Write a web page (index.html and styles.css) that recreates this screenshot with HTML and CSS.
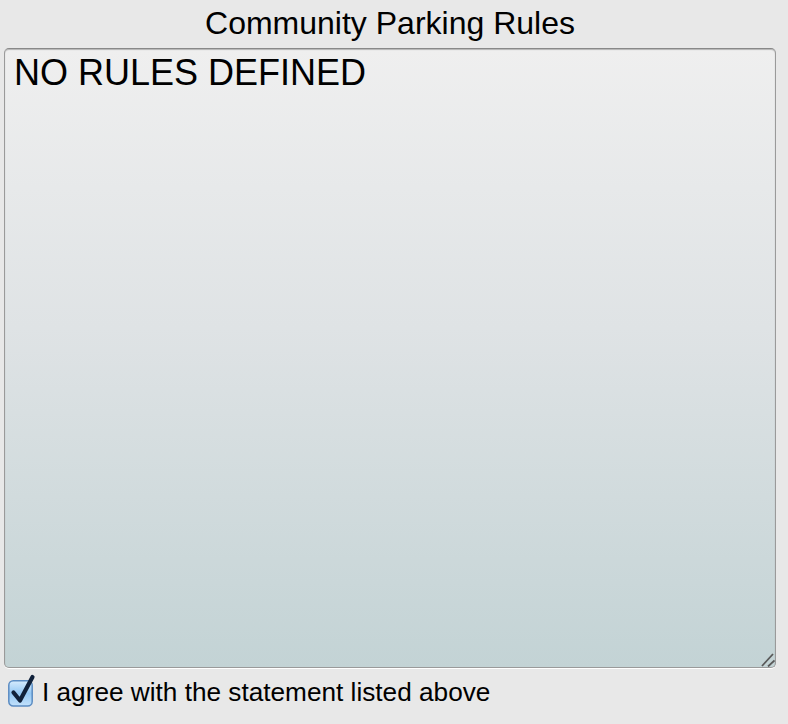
FILE: index.html
```html
<!DOCTYPE html>
<html>
<head>
<meta charset="utf-8">
<link rel="stylesheet" href="styles.css">
</head>
<body>
<div class="page">
  <h1 class="title">Community Parking Rules</h1>
  <div class="rules">
    <div class="rules-text">NO RULES DEFINED</div>
    <svg class="grip" width="16" height="16" viewBox="0 0 16 16">
      <line x1="3" y1="15" x2="14" y2="3" stroke="#585858" stroke-width="1.8"/>
      <line x1="9" y1="15.5" x2="15.5" y2="9.5" stroke="#585858" stroke-width="1.8"/>
    </svg>
  </div>
  <label class="agree">
    <span class="box">
      <svg width="30" height="34" viewBox="0 0 30 34">
        <defs>
          <linearGradient id="bg" x1="0" y1="0" x2="0" y2="1">
            <stop offset="0" stop-color="#d6ebfd"/>
            <stop offset="0.5" stop-color="#94c8f4"/>
            <stop offset="1" stop-color="#c2e1fb"/>
          </linearGradient>
        </defs>
        <rect x="0.8" y="6.8" width="23.4" height="25.2" rx="4.5" fill="url(#bg)" stroke="#5b8cc2" stroke-width="1.5"/>
        <path d="M5.5 18.5 L12 26.5 L24.5 3" fill="none" stroke="#10213a" stroke-width="4.2" stroke-linecap="round" stroke-linejoin="round"/>
      </svg>
    </span>
    <span class="agree-text">I agree with the statement listed above</span>
  </label>
</div>
</body>
</html>
```
FILE: styles.css
```css
html, body {
  margin: 0;
  padding: 0;
  background: #e8e8e8;
}
.page {
  width: 788px;
  height: 724px;
  display: flex;
  flex-direction: column;
  box-sizing: border-box;
  padding: 3px 12px 0 4px;
  font-family: "Liberation Sans", Arial, sans-serif;
  color: #000;
}
.title {
  margin: 0;
  font-weight: normal;
  font-size: 32px;
  line-height: 41px;
  text-align: center;
  height: 45px;
}
.rules {
  position: relative;
  height: 620px;
  box-sizing: border-box;
  border: 1px solid #9a9a9a;
  border-top-color: #888;
  border-radius: 5px;
  background: linear-gradient(#efefef, #dfe3e5 45%, #c3d3d5);
  box-shadow: inset 0 1px 1px rgba(0,0,0,0.25), 0 1px 0 #ffffff;
  padding: 3px 9px;
}
.rules-text {
  font-size: 36px;
  line-height: 42px;
}
.grip {
  position: absolute;
  right: 0;
  bottom: 0;
}
.agree {
  display: flex;
  align-items: flex-start;
  gap: 4px;
  margin-top: 7px;
  padding-left: 4px;
}
.box {
  display: flex;
  width: 30px;
  height: 34px;
  margin-top: -1px;
}
.agree-text {
  font-size: 26.2px;
  line-height: 30px;
  margin-top: 2px;
}
```
